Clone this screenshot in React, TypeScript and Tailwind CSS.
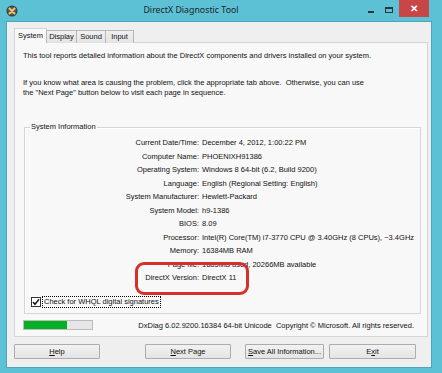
const rows: [string, string][] = [
  ["Current Date/Time:", "December 4, 2012, 1:00:22 PM"],
  ["Computer Name:", "PHOENIXH91386"],
  ["Operating System:", "Windows 8 64-bit (6.2, Build 9200)"],
  ["Language:", "English (Regional Setting: English)"],
  ["System Manufacturer:", "Hewlett-Packard"],
  ["System Model:", "h9-1386"],
  ["BIOS:", "8.09"],
  ["Processor:", "Intel(R) Core(TM) i7-3770 CPU @ 3.40GHz (8 CPUs), ~3.4GHz"],
  ["Memory:", "16384MB RAM"],
  ["Page file:", "1685MB used, 20266MB available"],
  ["DirectX Version:", "DirectX 11"],
];

const tabs = [
  { label: "System", w: "w-[33px]", active: true },
  { label: "Display", w: "w-[31px]", active: false },
  { label: "Sound", w: "w-[30px]", active: false },
  { label: "Input", w: "w-[29px]", active: false },
];

function DxIcon() {
  return (
    <svg width="12" height="12" viewBox="0 0 12 12">
      <circle cx="6" cy="6" r="5.5" fill="#3d3d3d" />
      <circle cx="6" cy="6" r="4.3" fill="#5a5a5a" />
      <path d="M3.4 3.4 L8.6 8.6 M8.6 3.4 L3.4 8.6" stroke="#f2d36b" strokeWidth="1.8" strokeLinecap="round" />
    </svg>
  );
}

function TitleBar() {
  return (
    <div className="relative flex h-[21px] items-center">
      <div className="ml-[6px] flex items-center">
        <DxIcon />
      </div>
      <div className="flex-1 pr-[4px] text-center font-['Noto_Sans',sans-serif] text-[8.8px] leading-[21px] text-[#1e1e1e]">
        DirectX Diagnostic Tool
      </div>
      <div className="mr-[13px] flex h-full items-start">
        <div className="mt-[11px] mr-[11px] h-[2px] w-[6px] bg-[#333]" />
        <div className="mt-[7px] mr-[6px] h-[6px] w-[8px] border border-[#333] border-t-2" />
        <div className="flex h-[17px] w-[30px] items-center justify-center bg-[#c94646] text-[10px] font-bold leading-none text-white">
          ✕
        </div>
      </div>
    </div>
  );
}

function Btn({ children, className = "" }: { children: React.ReactNode; className?: string }) {
  return (
    <div
      className={
        "flex h-[15px] items-center justify-center rounded-[1px] border border-[#acacac] bg-gradient-to-b from-[#f2f2f2] to-[#e4e4e4] text-[7.5px] " +
        className
      }
    >
      {children}
    </div>
  );
}

export default function App() {
  return (
    <div className="flex h-[373px] w-[442px] flex-col overflow-hidden bg-[#5cc1d5] font-['Liberation_Sans',Arial,sans-serif] text-[7.5px] text-[#111]">
      <TitleBar />
      <div className="mb-[5px] ml-[6px] mr-[10px] flex flex-1 flex-col border border-[#4aa6b8] bg-[#efefef] pl-[7px] pt-[6px]">
        <div className="relative z-10 flex h-[15px] items-end">
          {tabs.map((t) =>
            t.active ? (
              <div
                key={t.label}
                className={`${t.w} flex h-[15px] items-center justify-center border border-b-0 border-[#d4d4d4] bg-[#f8f8f8] leading-none`}
              >
                {t.label}
              </div>
            ) : (
              <div
                key={t.label}
                className={`${t.w} -ml-px flex h-[13px] items-center justify-center border border-b-0 border-[#b8b8b8] bg-gradient-to-b from-[#f0f0f0] to-[#e3e3e3] leading-none first:ml-0`}
              >
                {t.label}
              </div>
            )
          )}
        </div>
        <div className="relative -mt-px flex h-[295px] w-[414px] flex-col border border-[#d4d4d4] bg-[#f8f8f8]">
          <p className="mt-[8px] pl-[8px] leading-[10px]">
            This tool reports detailed information about the DirectX components and drivers installed on your system.
          </p>
          <p className="mt-[17px] pl-[8px] leading-[10px]">
            If you know what area is causing the problem, click the appropriate tab above.&nbsp; Otherwise, you can use
            <br />
            the "Next Page" button below to visit each page in sequence.
          </p>
          <fieldset className="ml-[9px] mr-[6px] mt-[24px] border border-[#d6d6d6] pb-[5px] shadow-[inset_1px_1px_0_#fff]">
            <legend className="ml-[5px] px-[1px] leading-[10px]">System Information</legend>
            <div className="mt-[4px] grid grid-cols-[174px_1fr] gap-x-[3px] leading-[13.5px]">
              {rows.map(([k, v]) => (
                <div key={k} className="contents">
                  <div className="text-right">{k}</div>
                  <div className="whitespace-nowrap">{v}</div>
                </div>
              ))}
            </div>
            <div className="ml-[6px] mt-[11px] flex h-[12px] items-center">
              <div className="flex h-[10px] w-[10px] items-center justify-center border border-[#333] bg-white">
                <svg width="8" height="8" viewBox="0 0 8 8">
                  <path d="M1 4 L3 6.3 L7 1.3" fill="none" stroke="#111" strokeWidth="1.4" />
                </svg>
              </div>
              <div className="ml-px border border-dotted border-black px-px leading-[10px]">
                Check for WHQL digital signatures
              </div>
            </div>
          </fieldset>
          <div className="mt-[6px] flex items-center pl-[8px] pr-[13px]">
            <div className="h-[10px] w-[70px] border border-[#bcbcbc] bg-[#e6e6e6]">
              <div className="h-full w-[63%] bg-[#06b025]" />
            </div>
            <div className="ml-auto whitespace-nowrap">
              DxDiag 6.02.9200.16384 64-bit Unicode&nbsp; Copyright © Microsoft. All rights reserved.
            </div>
          </div>
          <div className="absolute left-[120px] top-[219px] h-[33px] w-[114px] rounded-[9px] border-[3px] border-[#d92f2a]" />
        </div>
        <div className="mt-[7px] flex w-[414px]">
          <Btn className="w-[86px]">
            <span>
              <u>H</u>elp
            </span>
          </Btn>
          <Btn className="ml-[45px] w-[86px] border-[#8aa6c4]">
            <span>
              <u>N</u>ext Page
            </span>
          </Btn>
          <Btn className="ml-[14px] w-[79px]">
            <span>
              <u>S</u>ave All Information...
            </span>
          </Btn>
          <Btn className="ml-[5px] w-[87px]">
            <span>
              E<u>x</u>it
            </span>
          </Btn>
        </div>
      </div>
    </div>
  );
}
